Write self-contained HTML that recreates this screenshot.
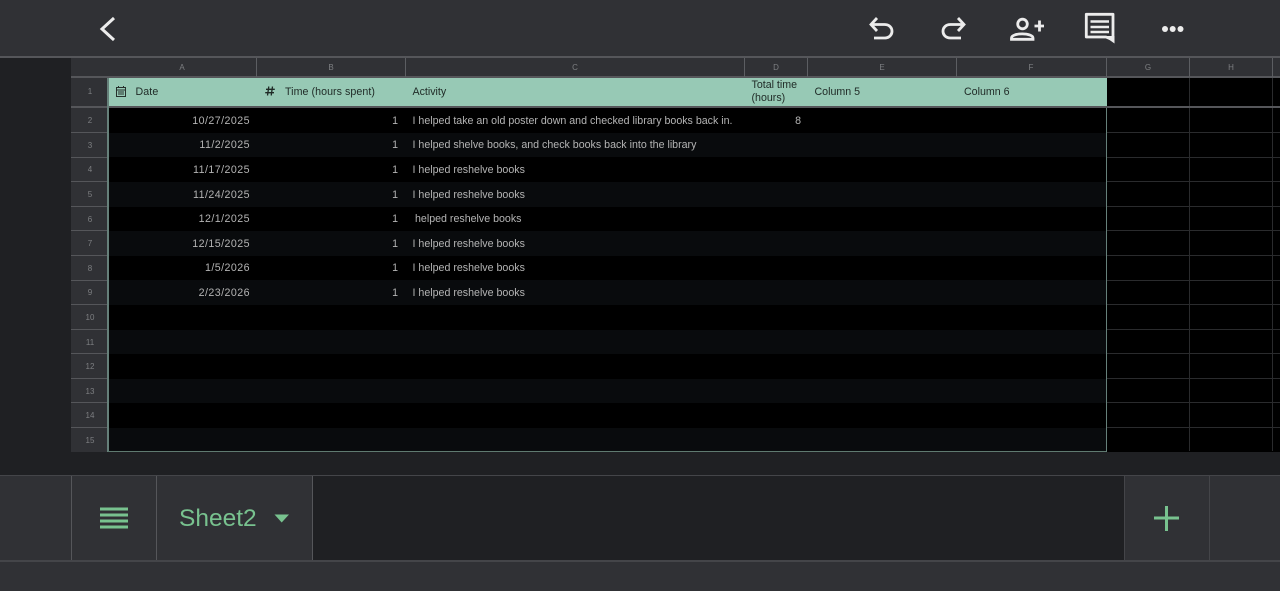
<!DOCTYPE html>
<html><head><meta charset="utf-8"><style>
html,body{margin:0;padding:0;background:#1f2023;width:1280px;height:591px;overflow:hidden;font-family:"Liberation Sans",sans-serif}
.a{position:absolute}
.t{position:absolute;white-space:nowrap;font-size:10.65px;line-height:14px;color:#b4b4b4}
.n{letter-spacing:.45px}
.h{color:#1f2a26}
.l{position:absolute;background:#5c5e62}
.c{position:absolute;white-space:nowrap;font-size:8px;line-height:10px;color:#7d7f82;text-align:center}
</style></head><body>
<div class="a" style="left:0;top:0;width:1280px;height:56px;background:#303135"></div>
<div class="a" style="left:0;top:56px;width:1280px;height:2px;background:#55565a"></div>
<svg class="a" style="left:0;top:0" width="1280" height="58" fill="none" stroke="#ececec" stroke-width="2.4">
<path d="M114 18L102 29L114 40" stroke-width="3"/>
<path d="M877 18L871 24.500L877 31M871.500 24.500H884.500C894.500 24.500 894.500 38 884.500 38H874" stroke-width="2.800"/>
<path d="M958 18L964 24.500L958 31M963.500 24.500H950.500C940.500 24.500 940.500 38 950.500 38H961" stroke-width="2.800"/>
<circle cx="1022.500" cy="24" r="4.800" stroke-width="2.800"/>
<path d="M1011.500 39.300V38C1011.500 32.500 1033 32.500 1033 38V39.300Z" stroke-width="2.800"/>
<path d="M1034.500 26H1044M1039.500 20.500V31.500" stroke-width="2.800"/>
<path d="M1086.300 14.300H1113V40L1106 37H1086.300Z" stroke-width="2.800" stroke-linejoin="round"/>
<path d="M1104 36L1114.500 36L1114.500 43.500Z" fill="#ececec" stroke="none"/>
<path d="M1090.500 21.500H1109M1090.500 27H1109M1090.500 32H1109" stroke-width="2.500"/>
<circle cx="1165" cy="29" r="3" fill="#ececec" stroke="none"/><circle cx="1172.700" cy="29" r="3" fill="#ececec" stroke="none"/><circle cx="1180.500" cy="29" r="3" fill="#ececec" stroke="none"/>
</svg>

<!-- column header -->
<div class="a" style="left:71px;top:58px;width:1209px;height:19px;background:#303135"></div>
<div class="a" style="left:71px;top:76px;width:1209px;height:2px;background:#55565a"></div>
<div class="l" style="left:256px;top:58px;width:1px;height:19px"></div>
<div class="l" style="left:405px;top:58px;width:1px;height:19px"></div>
<div class="l" style="left:744px;top:58px;width:1px;height:19px"></div>
<div class="l" style="left:807px;top:58px;width:1px;height:19px"></div>
<div class="l" style="left:956px;top:58px;width:1px;height:19px"></div>
<div class="l" style="left:1106px;top:58px;width:1px;height:19px"></div>
<div class="l" style="left:1189px;top:58px;width:1px;height:19px"></div>
<div class="l" style="left:1272px;top:58px;width:1px;height:19px"></div>
<div class="c" style="left:172px;top:63px;width:20px">A</div>
<div class="c" style="left:321px;top:63px;width:20px">B</div>
<div class="c" style="left:565px;top:63px;width:20px">C</div>
<div class="c" style="left:766px;top:63px;width:20px">D</div>
<div class="c" style="left:872px;top:63px;width:20px">E</div>
<div class="c" style="left:1021px;top:63px;width:20px">F</div>
<div class="c" style="left:1138px;top:63px;width:20px">G</div>
<div class="c" style="left:1221px;top:63px;width:20px">H</div>

<!-- row gutter -->
<div class="a" style="left:71px;top:78px;width:37px;height:374px;background:#303135"></div>

<!-- black grid -->
<div class="a" style="left:108px;top:108px;width:1172px;height:343.500px;background:#000"></div>
<div class="a" style="left:1107px;top:78px;width:173px;height:29px;background:#000"></div>
<!-- banding -->
<div class="a" style="left:108px;top:132.500px;width:998px;height:24.500px;background:#090b0d"></div>
<div class="a" style="left:108px;top:182px;width:998px;height:24.500px;background:#090b0d"></div>
<div class="a" style="left:108px;top:231px;width:998px;height:24.500px;background:#090b0d"></div>
<div class="a" style="left:108px;top:280px;width:998px;height:24.500px;background:#090b0d"></div>
<div class="a" style="left:108px;top:329.500px;width:998px;height:24.500px;background:#090b0d"></div>
<div class="a" style="left:108px;top:378.500px;width:998px;height:24.500px;background:#090b0d"></div>
<div class="a" style="left:108px;top:427.500px;width:998px;height:24px;background:#090b0d"></div>

<!-- right grid lines -->
<div class="a" style="left:1189px;top:78px;width:1px;height:373px;background:#2a2b2d"></div>
<div class="a" style="left:1272px;top:78px;width:1px;height:373px;background:#2a2b2d"></div>
<div class="a" style="left:1107px;top:132px;width:173px;height:1px;background:#2a2b2d"></div>
<div class="a" style="left:1107px;top:157px;width:173px;height:1px;background:#2a2b2d"></div>
<div class="a" style="left:1107px;top:181px;width:173px;height:1px;background:#2a2b2d"></div>
<div class="a" style="left:1107px;top:206px;width:173px;height:1px;background:#2a2b2d"></div>
<div class="a" style="left:1107px;top:230px;width:173px;height:1px;background:#2a2b2d"></div>
<div class="a" style="left:1107px;top:255px;width:173px;height:1px;background:#2a2b2d"></div>
<div class="a" style="left:1107px;top:280px;width:173px;height:1px;background:#2a2b2d"></div>
<div class="a" style="left:1107px;top:304px;width:173px;height:1px;background:#2a2b2d"></div>
<div class="a" style="left:1107px;top:329px;width:173px;height:1px;background:#2a2b2d"></div>
<div class="a" style="left:1107px;top:353px;width:173px;height:1px;background:#2a2b2d"></div>
<div class="a" style="left:1107px;top:378px;width:173px;height:1px;background:#2a2b2d"></div>
<div class="a" style="left:1107px;top:402px;width:173px;height:1px;background:#2a2b2d"></div>
<div class="a" style="left:1107px;top:427px;width:173px;height:1px;background:#2a2b2d"></div>

<!-- gutter separators -->
<div class="a" style="left:71px;top:132px;width:37px;height:1px;background:#55565a"></div>
<div class="a" style="left:71px;top:157px;width:37px;height:1px;background:#55565a"></div>
<div class="a" style="left:71px;top:181px;width:37px;height:1px;background:#55565a"></div>
<div class="a" style="left:71px;top:206px;width:37px;height:1px;background:#55565a"></div>
<div class="a" style="left:71px;top:230px;width:37px;height:1px;background:#55565a"></div>
<div class="a" style="left:71px;top:255px;width:37px;height:1px;background:#55565a"></div>
<div class="a" style="left:71px;top:280px;width:37px;height:1px;background:#55565a"></div>
<div class="a" style="left:71px;top:304px;width:37px;height:1px;background:#55565a"></div>
<div class="a" style="left:71px;top:329px;width:37px;height:1px;background:#55565a"></div>
<div class="a" style="left:71px;top:353px;width:37px;height:1px;background:#55565a"></div>
<div class="a" style="left:71px;top:378px;width:37px;height:1px;background:#55565a"></div>
<div class="a" style="left:71px;top:402px;width:37px;height:1px;background:#55565a"></div>
<div class="a" style="left:71px;top:427px;width:37px;height:1px;background:#55565a"></div>

<!-- row numbers -->
<div class="c" style="left:80px;top:87px;width:20px">1</div>
<div class="c" style="left:80px;top:116px;width:20px">2</div>
<div class="c" style="left:80px;top:141px;width:20px">3</div>
<div class="c" style="left:80px;top:165px;width:20px">4</div>
<div class="c" style="left:80px;top:190px;width:20px">5</div>
<div class="c" style="left:80px;top:215px;width:20px">6</div>
<div class="c" style="left:80px;top:239px;width:20px">7</div>
<div class="c" style="left:80px;top:264px;width:20px">8</div>
<div class="c" style="left:80px;top:288px;width:20px">9</div>
<div class="c" style="left:80px;top:313px;width:20px">10</div>
<div class="c" style="left:80px;top:338px;width:20px">11</div>
<div class="c" style="left:80px;top:362px;width:20px">12</div>
<div class="c" style="left:80px;top:387px;width:20px">13</div>
<div class="c" style="left:80px;top:411px;width:20px">14</div>
<div class="c" style="left:80px;top:436px;width:20px">15</div>

<!-- table header -->
<div class="a" style="left:108px;top:78px;width:999px;height:28px;background:#97c9b5"></div>
<div class="a" style="left:71px;top:106px;width:1209px;height:2px;background:#55565a"></div>
<!-- table border -->
<div class="a" style="left:107px;top:78px;width:1.500px;height:374px;background:#66807a"></div>
<div class="a" style="left:1105.500px;top:108px;width:1.500px;height:344px;background:#66807a"></div>
<div class="a" style="left:108px;top:451px;width:998px;height:1px;background:#5f7a70"></div>

<svg class="a" style="left:116px;top:86px" width="10" height="11" fill="none" stroke="#26302c" stroke-width="1"><rect x=".5" y="1.500" width="9" height="9"/><path d="M.5 4H9.500M2.500 0V2M7.500 0V2M2 6H8M2 8H8"/></svg>
<svg class="a" style="left:265px;top:86px" width="10" height="10" fill="none" stroke="#1f2a26" stroke-width="1.300"><path d="M3.800 .5L2.500 9.500M7.500 .5L6.200 9.500M1 3.300H9.800M.2 6.700H9"/></svg>

<div class="t h" style="left:135.500px;top:85px;letter-spacing:.1px">Date</div>
<div class="t h" style="left:285px;top:85px;letter-spacing:.06px">Time (hours spent)</div>
<div class="t h" style="left:412.500px;top:85px">Activity</div>
<div class="t h" style="left:751.500px;top:79px;line-height:13px">Total time<br>(hours)</div>
<div class="t h" style="left:814.500px;top:85px">Column 5</div>
<div class="t h" style="left:964px;top:85px">Column 6</div>

<!-- data -->
<div class="t n" style="right:1030px;top:114px">10/27/2025</div>
<div class="t n" style="right:1030px;top:138px">11/2/2025</div>
<div class="t n" style="right:1030px;top:163px">11/17/2025</div>
<div class="t n" style="right:1030px;top:188px">11/24/2025</div>
<div class="t n" style="right:1030px;top:212px">12/1/2025</div>
<div class="t n" style="right:1030px;top:237px">12/15/2025</div>
<div class="t n" style="right:1030px;top:261px">1/5/2026</div>
<div class="t n" style="right:1030px;top:286px">2/23/2026</div>

<div class="t" style="right:882px;top:114px">1</div>
<div class="t" style="right:882px;top:138px">1</div>
<div class="t" style="right:882px;top:163px">1</div>
<div class="t" style="right:882px;top:188px">1</div>
<div class="t" style="right:882px;top:212px">1</div>
<div class="t" style="right:882px;top:237px">1</div>
<div class="t" style="right:882px;top:261px">1</div>
<div class="t" style="right:882px;top:286px">1</div>

<div class="t" style="left:412.500px;top:114px">I helped take an old poster down and checked library books back in.</div>
<div class="t" style="left:412.500px;top:138px">I helped shelve books, and check books back into the library</div>
<div class="t" style="left:412.500px;top:163px">I helped reshelve books</div>
<div class="t" style="left:412.500px;top:188px">I helped reshelve books</div>
<div class="t" style="left:415px;top:212px">helped reshelve books</div>
<div class="t" style="left:412.500px;top:237px">I helped reshelve books</div>
<div class="t" style="left:412.500px;top:261px">I helped reshelve books</div>
<div class="t" style="left:412.500px;top:286px">I helped reshelve books</div>
<div class="t" style="right:479px;top:114px">8</div>

<!-- bottom bar -->
<div class="a" style="left:0;top:475px;width:1280px;height:116px;background:#303135"></div>
<div class="a" style="left:312px;top:476px;width:812px;height:84px;background:#1f2023"></div>
<div class="a" style="left:0;top:475px;width:1280px;height:1px;background:#444549"></div>
<div class="a" style="left:0;top:560px;width:1280px;height:2px;background:#444549"></div>
<div class="a" style="left:71px;top:476px;width:1px;height:84px;background:#55565a"></div>
<div class="a" style="left:156px;top:476px;width:1px;height:84px;background:#55565a"></div>
<div class="a" style="left:311.500px;top:476px;width:1.500px;height:84px;background:#55565a"></div>
<div class="a" style="left:1124px;top:476px;width:1px;height:84px;background:#444549"></div>
<div class="a" style="left:1208.500px;top:476px;width:1.500px;height:84px;background:#444549"></div>

<svg class="a" style="left:100px;top:507px" width="28" height="23" fill="#78c28f">
<rect x="0" y="0.500" width="28" height="3"/><rect x="0" y="6.500" width="28" height="3"/><rect x="0" y="12.500" width="28" height="3"/><rect x="0" y="18.500" width="28" height="3"/>
</svg>
<div class="a" style="left:179px;top:504px;font-size:24.500px;line-height:30px;color:#78c28f;white-space:nowrap">Sheet2</div>
<svg class="a" style="left:274px;top:514px" width="16" height="9" fill="#78c28f"><path d="M.5 .500H15L7.700 8.500Z"/></svg>
<svg class="a" style="left:1154px;top:506px" width="25" height="25" fill="#78c28f"><rect x="0" y="10.500" width="25" height="3"/><rect x="11" y="0" width="3" height="25"/></svg>
</body></html>
